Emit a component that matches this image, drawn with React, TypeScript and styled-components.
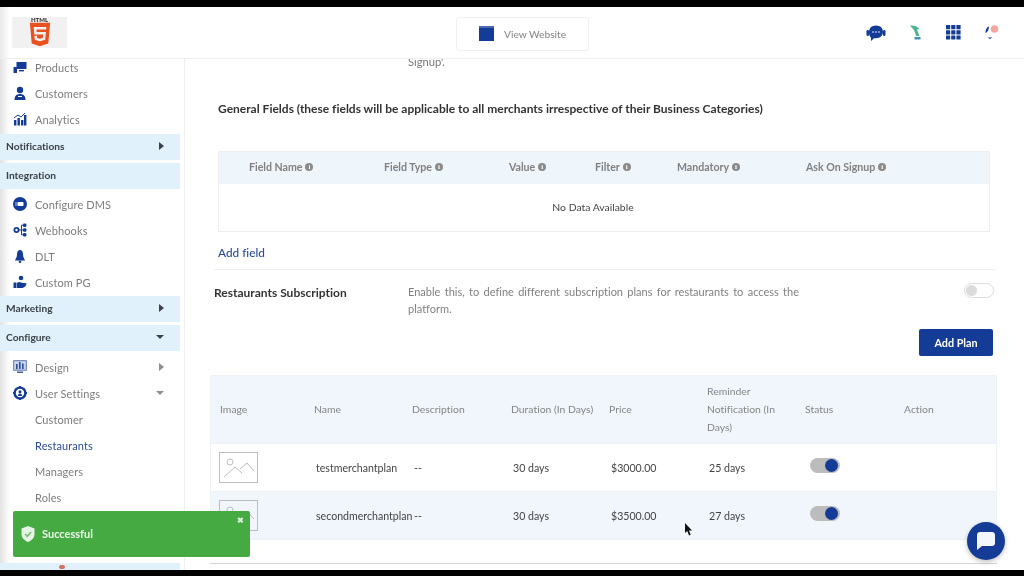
import React from 'react'
import styled, { createGlobalStyle } from 'styled-components'
import { FaHtml5 } from 'react-icons/fa'

const BLUE = '#143c96'

const GlobalStyle = createGlobalStyle`
  html, body {
    margin: 0;
    padding: 0;
    background: #000;
  }
  body {
    font-family: Lato, "Open Sans", "Liberation Sans", sans-serif;
    font-variant-ligatures: none;
  }
  * {
    box-sizing: border-box;
  }
`

const Frame = styled.div`
  width: 1024px;
  height: 576px;
  padding: 7px 0 6px;
  background: #000;
  overflow: hidden;
`

const Screen = styled.div`
  position: relative;
  height: 563px;
  background: #fff;
  overflow: hidden;
  display: flex;
  flex-direction: column;
  filter: blur(0.35px);
`

const Header = styled.header`
  position: relative;
  z-index: 1;
  flex: none;
  height: 52px;
  display: flex;
  align-items: center;
  padding: 0 25px 0 12px;
  border-bottom: 1px solid #efefef;
  background: linear-gradient(90deg, #e9e9e9 0, #fff 10px);
`

const LogoBox = styled.div`
  width: 55px;
  height: 31px;
  background: #f1f1f1;
  display: flex;
  flex-direction: column;
  align-items: center;
  color: #e8501f;
  font-size: 30px;
  line-height: 0;
`

const LogoWord = styled.span`
  height: 5px;
  margin: 0 0 -1px;
  font: 900 6px/6px Lato, sans-serif;
  color: #333;
`

const ViewWebsite = styled.button`
  margin: 2px 0 0 389px;
  width: 133px;
  height: 34px;
  display: flex;
  align-items: center;
  gap: 10px;
  padding: 0 0 0 22px;
  background: #fff;
  border: 1px solid #f0f0f0;
  border-radius: 3px;
  color: #8b8b8b;
  font: 500 10.2px Lato, sans-serif;
`

const WebsiteIcon = styled.span`
  width: 15px;
  height: 15px;
  background: ${BLUE};
  border-top: 2px solid #4a68b2;
`

const HeaderIcons = styled.div`
  margin-left: auto;
  display: flex;
  align-items: center;
  gap: 22px;
`

const Body = styled.div`
  flex: 1;
  min-height: 0;
  display: flex;
`

const Sidebar = styled.nav`
  flex: none;
  width: 185px;
  padding: 0 4px 0 0;
  border-right: 1px solid #efefef;
  background: linear-gradient(90deg, #e2e2e2 0, #fff 10px);
  overflow: hidden;
`

const NavList = styled.div`
  margin-top: -5px;
`

const NavItem = styled.div<{ $active?: boolean; $indent?: number }>`
  height: 26px;
  display: flex;
  align-items: center;
  gap: 8px;
  padding: 0 16px 0 ${(p) => p.$indent ?? 13}px;
  font-size: 11px;
  color: ${(p) => (p.$active ? '#2c4b9a' : '#7c7c7c')};
  letter-spacing: 0.1px;
`

const NavGroup = styled.div<{ $above?: number; $below?: number }>`
  height: 26px;
  margin: ${(p) => p.$above ?? 1}px 0 ${(p) => p.$below ?? 3}px;
  display: flex;
  align-items: center;
  padding: 0 16px 3px 6px;
  background: #e1f1fb;
  color: #3a4148;
  font-size: 10.2px;
  font-weight: 700;
`

const NavHidden = styled.div`
  height: 52px;
`

const RedMark = styled.span`
  align-self: flex-start;
  margin: 2px 0 0 53px;
  width: 6px;
  height: 4px;
  background: #d9705f;
  border-radius: 2px;
`

const Caret = styled.span<{ $down?: boolean; $light?: boolean }>`
  margin-left: auto;
  width: 0;
  height: 0;
  ${(p) =>
    p.$down
      ? `border-left: 4px solid transparent; border-right: 4px solid transparent; border-top: 4px solid ${p.$light ? '#8d8d8d' : '#3a4148'};`
      : `border-top: 4px solid transparent; border-bottom: 4px solid transparent; border-left: 5px solid ${p.$light ? '#8d8d8d' : '#3a4148'};`}
`

const Main = styled.main`
  flex: 1;
  min-width: 0;
  padding: 0 27px 0 24px;
  overflow: hidden;
`

const Clipped = styled.div`
  height: 8px;
  margin-left: 199px;
  font-size: 11.2px;
  line-height: 6px;
  color: #777;
`

const SectionTitle = styled.h2`
  margin: 34px 0 0 9px;
  font-size: 12px;
  line-height: 16px;
  font-weight: 700;
  color: #333;
`

const FieldTable = styled.div`
  margin: 34px 7px 0 9px;
  border: 1px solid #eeeeee;
`

const FieldHead = styled.div`
  height: 32px;
  padding-bottom: 2px;
  display: grid;
  grid-template-columns: 135px 125px 86px 82px 129px 1fr;
  align-items: center;
  padding-left: 30px;
  background: #eef6fc;
  color: #808080;
  font-size: 10.6px;
  font-weight: 700;
`

const HeadCell = styled.span`
  display: flex;
  align-items: center;
  gap: 3px;
`

const InfoDot = styled.span`
  width: 8px;
  height: 8px;
  border-radius: 50%;
  background: #8a8a8a;
  color: #fff;
  font: 700 7px/8px "Liberation Serif", serif;
  text-align: center;
`

const EmptyRow = styled.div`
  height: 47px;
  padding: 0 22px 2px 0;
  display: flex;
  align-items: center;
  justify-content: center;
  font-size: 10.4px;
  color: #444;
`

const AddField = styled.a`
  display: block;
  margin: 13px 0 0 9px;
  line-height: 16px;
  font-size: 11.8px;
  font-weight: 500;
  color: #2c4b9a;
`

const SubscriptionRow = styled.section`
  margin: 8px 2px 0 5px;
  border-top: 1px solid #f0f0f0;
  padding-top: 13px;
  display: grid;
  grid-template-columns: 194px 391px 1fr;
`

const SubscriptionTitle = styled.div`
  margin-top: 2px;
  font-size: 12px;
  line-height: 16px;
  font-weight: 700;
  color: #333;
`

const SubscriptionText = styled.p`
  margin: 0;
  font-size: 11px;
  line-height: 17px;
  color: #808080;
  text-align: justify;
`

const Switch = styled.span<{ $on?: boolean }>`
  display: block;
  position: relative;
  width: 30px;
  height: 15px;
  border-radius: 8px;
  background: ${(p) => (p.$on ? '#bcbcbc' : '#fff')};
  border: ${(p) => (p.$on ? 'none' : '1px solid #dcdcdc')};
  &::after {
    content: '';
    position: absolute;
    top: 1px;
    left: ${(p) => (p.$on ? 15 : 1)}px;
    width: ${(p) => (p.$on ? 13 : 11)}px;
    height: ${(p) => (p.$on ? 13 : 11)}px;
    border-radius: 50%;
    background: ${(p) => (p.$on ? BLUE : '#dcdcdc')};
  }
`

const SwitchCell = styled.div`
  justify-self: end;
  margin-right: 1px;
`

const PlanActions = styled.div`
  display: flex;
  justify-content: flex-end;
  margin: 12px 4px 0 0;
`

const AddPlan = styled.button`
  width: 74px;
  height: 27px;
  padding: 0;
  border: none;
  border-radius: 2px;
  background: ${BLUE};
  color: #fff;
  font: 700 10.8px Lato, sans-serif;
`

const PlanTable = styled.div`
  margin: 19px 0 0 1px;
  border-bottom: 1px solid #d5d5d5;
  padding-bottom: 23px;
`

const PlanRow = styled.div<{ $tint?: boolean; $head?: boolean }>`
  display: grid;
  grid-template-columns: 94px 98px 99px 98px 98px 98px 99px 1fr;
  align-items: center;
  height: ${(p) => (p.$head ? 69 : 48)}px;
  padding-bottom: ${(p) => (p.$head ? 2 : 0)}px;
  background: ${(p) => (p.$tint ? '#f0f6fc' : '#fff')};
  border: 1px solid #eef2f6;
  border-top: ${(p) => (p.$head ? undefined : 'none')};
  color: ${(p) => (p.$head ? '#858585' : '#444')};
  font-size: ${(p) => (p.$head ? 10.4 : 10.6)}px;
  line-height: 18px;
`

const PlanHead = styled.span`
  padding: 0 6px 0 9px;
`

const PlanCell = styled.span`
  padding-left: 11px;
  white-space: nowrap;
`

const Thumb = styled.span`
  display: block;
  margin-left: 8px;
  width: 39px;
  height: 31px;
  line-height: 0;
`

const StatusCell = styled.span`
  display: block;
  padding-left: 14px;
  margin-top: -4px;
`

const Toast = styled.div`
  position: absolute;
  left: 13px;
  top: 504px;
  width: 237px;
  height: 46px;
  display: flex;
  align-items: center;
  gap: 7px;
  padding: 0 0 1px 8px;
  background: #45aa41;
  border-radius: 2px;
  color: #eef8ed;
  font-size: 11px;
  font-weight: 700;
`

const ToastClose = styled.span`
  position: absolute;
  top: 3px;
  right: 6px;
  font-size: 8px;
  line-height: 12px;
  color: #e3f3e2;
`

const ChatBubble = styled.button`
  position: absolute;
  left: 967px;
  top: 515px;
  width: 38px;
  height: 38px;
  padding: 0;
  border: none;
  border-radius: 50%;
  background: ${BLUE};
  box-shadow: 0 2px 5px rgba(0, 0, 0, 0.25);
  display: flex;
  align-items: center;
  justify-content: center;
`

const Pointer = styled.svg`
  position: absolute;
  left: 684px;
  top: 516px;
`

type IconName =
  | 'products'
  | 'customers'
  | 'analytics'
  | 'dms'
  | 'webhooks'
  | 'bell'
  | 'pg'
  | 'design'
  | 'settings'

function NavIcon({ name }: { name: IconName }) {
  return (
    <svg width="14" height="14" viewBox="0 0 14 14" fill={BLUE} style={{ flex: 'none' }}>
      {name === 'products' && (
        <>
          <rect x="3.5" y="2" width="10" height="7" />
          <rect x="6" y="10" width="5" height="1.4" />
          <rect x="0.5" y="7" width="3.5" height="6" rx="0.5" />
        </>
      )}
      {name === 'customers' && (
        <>
          <circle cx="7" cy="4" r="3.2" />
          <path d="M1.5 14c0-4 2-6 5.500-6s5.500 2 5.500 6z" />
          <path d="M5 10h4v1H5z" fill="#fff" />
        </>
      )}
      {name === 'analytics' && (
        <>
          <rect x="1" y="8" width="2.4" height="5.5" />
          <rect x="4.5" y="6" width="2.4" height="7.5" />
          <rect x="8" y="8" width="2.4" height="5.5" />
          <rect x="11" y="3" width="2.4" height="10.5" />
          <path d="M1 6l4-3 3 2 4-4" fill="none" stroke={BLUE} />
        </>
      )}
      {name === 'dms' && (
        <>
          <circle cx="7" cy="7" r="7" />
          <rect x="4.5" y="5" width="6" height="4" rx="0.8" fill="#fff" />
          <path d="M2 6h2M2 8h2" stroke="#fff" strokeWidth="0.7" />
        </>
      )}
      {name === 'webhooks' && (
        <>
          <circle cx="3.5" cy="7" r="3" />
          <circle cx="3.5" cy="7" r="1.2" fill="#fff" />
          <rect x="10" y="0.5" width="3.4" height="3.4" rx="1" />
          <rect x="10" y="5.3" width="3.4" height="3.4" rx="1" />
          <rect x="10" y="10.1" width="3.4" height="3.4" rx="1" />
          <path d="M6 7h4M8.500 2.200V11.800M8.500 2.200H10M8.500 11.800H10" fill="none" stroke={BLUE} />
        </>
      )}
      {name === 'bell' && (
        <>
          <path d="M7 1c2 0 3 2 3 4.500 0 3 1.500 4 2 6H2c.5-2 2-3 2-6C4 3 5 1 7 1z" />
          <circle cx="7" cy="12.700" r="1.300" />
        </>
      )}
      {name === 'pg' && (
        <>
          <circle cx="8" cy="3" r="2.300" />
          <rect x="0.500" y="7.500" width="3" height="5.500" />
          <path d="M4 8c3-2 4 0 6 0s3 .5 3.500 0c0 2.500-2 5-5 5H4z" />
        </>
      )}
      {name === 'design' && (
        <>
          <rect x="0.700" y="0.700" width="12.600" height="9.500" fill="#c9d2ea" stroke="#44609f" strokeWidth="0.800" />
          <rect x="3" y="4" width="1.600" height="5" fill="#2f4e9c" />
          <rect x="6" y="2" width="1.600" height="7" fill="#2f4e9c" />
          <rect x="9" y="3.500" width="1.600" height="5.500" fill="#2f4e9c" />
          <rect x="4" y="11.500" width="6" height="1.500" fill="#44609f" />
        </>
      )}
      {name === 'settings' && (
        <>
          <circle cx="7" cy="7" r="5.400" fill="none" stroke={BLUE} strokeWidth="2.400" />
          <path d="M6 0h2v2H6zM6 12h2v2H6zM0 6h2v2H0zM12 6h2v2h-2z" />
          <circle cx="7" cy="5.800" r="1.500" />
          <path d="M5 10c0-2 1-2.600 2-2.600s2 .6 2 2.600z" />
        </>
      )}
    </svg>
  )
}

function ImagePlaceholder() {
  return (
    <svg width="39" height="31" viewBox="0 0 39 31" fill="none" stroke="#bdbdbd" strokeWidth="1">
      <rect x="0.500" y="0.500" width="38" height="30" />
      <circle cx="11" cy="10" r="3" />
      <path d="M5 25l11-10 7 6M21 17l7-6 7 8" />
    </svg>
  )
}

function Info({ label }: { label: string }) {
  return (
    <HeadCell>
      {label}
      <InfoDot>i</InfoDot>
    </HeadCell>
  )
}

const fieldColumns = ['Field Name', 'Field Type', 'Value', 'Filter', 'Mandatory', 'Ask On Signup']

const planColumns = [
  'Image',
  'Name',
  'Description',
  'Duration (In Days)',
  'Price',
  'Reminder Notification (In Days)',
  'Status',
  'Action',
]

const plans = [
  { name: 'testmerchantplan', price: '$3000.00', reminder: '25 days', tint: false },
  { name: 'secondmerchantplan', price: '$3500.00', reminder: '27 days', tint: true },
]

export default function App() {
  return (
    <>
      <GlobalStyle />
      <Frame>
        <Screen>
          <Header>
            <LogoBox>
              <LogoWord>HTML</LogoWord>
              <FaHtml5 />
            </LogoBox>
            <ViewWebsite type="button">
              <WebsiteIcon />
              View Website
            </ViewWebsite>
            <HeaderIcons>
              <svg width="20" height="18" viewBox="0 0 20 18" fill={BLUE}>
                <path d="M10 1.500c4.400 0 7 2.800 7 6.500s-3 6.200-7 6.200H8L5 17v-3.400C3.400 12.500 3 10.200 3 8c0-3.700 2.600-6.500 7-6.500z" />
                <rect x="0.500" y="6" width="2.500" height="6" rx="1.200" />
                <rect x="17" y="6" width="2.500" height="6" rx="1.200" />
                <circle cx="7" cy="8" r="0.800" fill="#fff" />
                <circle cx="10" cy="8" r="0.800" fill="#fff" />
                <circle cx="13" cy="8" r="0.800" fill="#fff" />
              </svg>
              <svg width="16" height="16" viewBox="0 0 16 16">
                <path d="M2 0.500c3.500-.5 7 .5 9.500 3.500L9 4.500 11.500 11H8C7.500 8.500 6.500 6 5.500 4.500 4.500 3 3 2 2 0.500z" fill="#4fb48e" />
                <path d="M6.500 12h6v2.500h-6z" fill="#4d8fa8" />
              </svg>
              <svg width="15" height="15" viewBox="0 0 15 15" fill={BLUE}>
                {[0, 5.2, 10.4].map((y) =>
                  [0, 5.2, 10.4].map((x) => <rect key={`${x}-${y}`} x={x} y={y} width="4.200" height="4.200" rx="0.500" />),
                )}
              </svg>
              <svg width="16" height="16" viewBox="0 0 16 16">
                <circle cx="11.500" cy="4" r="3.800" fill="#f4a5a0" />
                <path d="M6 1.500c-2.500.5-3.500 3-3.500 6.500 1.800-.5 3.500-3.500 3.500-6.500z" fill={BLUE} />
                <path d="M4.500 12.500h5L7 14z" fill={BLUE} />
              </svg>
            </HeaderIcons>
          </Header>
          <Body>
            <Sidebar>
              <NavList>
                <NavItem>
                  <NavIcon name="products" />
                  Products
                </NavItem>
                <NavItem>
                  <NavIcon name="customers" />
                  Customers
                </NavItem>
                <NavItem>
                  <NavIcon name="analytics" />
                  Analytics
                </NavItem>
                <NavGroup $above={2}>
                  Notifications
                  <Caret />
                </NavGroup>
                <NavGroup $below={2}>Integration</NavGroup>
                <NavItem>
                  <NavIcon name="dms" />
                  Configure DMS
                </NavItem>
                <NavItem>
                  <NavIcon name="webhooks" />
                  Webhooks
                </NavItem>
                <NavItem>
                  <NavIcon name="bell" />
                  DLT
                </NavItem>
                <NavItem>
                  <NavIcon name="pg" />
                  Custom PG
                </NavItem>
                <NavGroup>
                  Marketing
                  <Caret />
                </NavGroup>
                <NavGroup>
                  Configure
                  <Caret $down />
                </NavGroup>
                <NavItem>
                  <NavIcon name="design" />
                  Design
                  <Caret $light />
                </NavItem>
                <NavItem>
                  <NavIcon name="settings" />
                  User Settings
                  <Caret $down $light />
                </NavItem>
                <NavItem $indent={35}>Customer</NavItem>
                <NavItem $indent={35} $active>
                  Restaurants
                </NavItem>
                <NavItem $indent={35}>Managers</NavItem>
                <NavItem $indent={35}>Roles</NavItem>
                <NavHidden />
                <NavGroup>
                  <RedMark />
                </NavGroup>
              </NavList>
            </Sidebar>
            <Main>
              <Clipped>Signup'.</Clipped>
              <SectionTitle>
                General Fields (these fields will be applicable to all merchants irrespective of their Business Categories)
              </SectionTitle>
              <FieldTable>
                <FieldHead>
                  {fieldColumns.map((c) => (
                    <Info key={c} label={c} />
                  ))}
                </FieldHead>
                <EmptyRow>No Data Available</EmptyRow>
              </FieldTable>
              <AddField>Add field</AddField>
              <SubscriptionRow>
                <SubscriptionTitle>Restaurants Subscription</SubscriptionTitle>
                <SubscriptionText>
                  Enable this, to define different subscription plans for restaurants to access the platform.
                </SubscriptionText>
                <SwitchCell>
                  <Switch />
                </SwitchCell>
              </SubscriptionRow>
              <PlanActions>
                <AddPlan type="button">Add Plan</AddPlan>
              </PlanActions>
              <PlanTable>
                <PlanRow $head $tint>
                  {planColumns.map((c) => (
                    <PlanHead key={c}>{c}</PlanHead>
                  ))}
                </PlanRow>
                {plans.map((p) => (
                  <PlanRow key={p.name} $tint={p.tint}>
                    <Thumb>
                      <ImagePlaceholder />
                    </Thumb>
                    <PlanCell>{p.name}</PlanCell>
                    <PlanCell>--</PlanCell>
                    <PlanCell>30 days</PlanCell>
                    <PlanCell>{p.price}</PlanCell>
                    <PlanCell>{p.reminder}</PlanCell>
                    <StatusCell>
                      <Switch $on />
                    </StatusCell>
                    <span />
                  </PlanRow>
                ))}
              </PlanTable>
            </Main>
          </Body>
          <Toast>
            <svg width="14" height="16" viewBox="0 0 14 16">
              <path d="M7 0l6.500 2.500V8c0 4-3 6.500-6.500 8C3.500 14.500.5 12 .5 8V2.500z" fill="#e6f4e5" />
              <path d="M4 8l2.300 2.300L10 6" fill="none" stroke="#6fbd6b" strokeWidth="1.500" />
            </svg>
            Successful
            <ToastClose>✖</ToastClose>
          </Toast>
          <ChatBubble type="button" aria-label="Chat">
            <svg width="20" height="20" viewBox="0 0 20 20">
              <path d="M4 1h12c1.700 0 3 1.300 3 3v8c0 1.700-1.300 3-3 3H6l-5 4V4c0-1.700 1.300-3 3-3z" fill="#f4f6fb" />
            </svg>
          </ChatBubble>
          <Pointer width="9" height="14" viewBox="0 0 9 14">
            <path d="M1 0v10l2.300-2 1.700 4.500 1.700-.7L5 7.500h3z" fill="#111" />
          </Pointer>
        </Screen>
      </Frame>
    </>
  )
}
